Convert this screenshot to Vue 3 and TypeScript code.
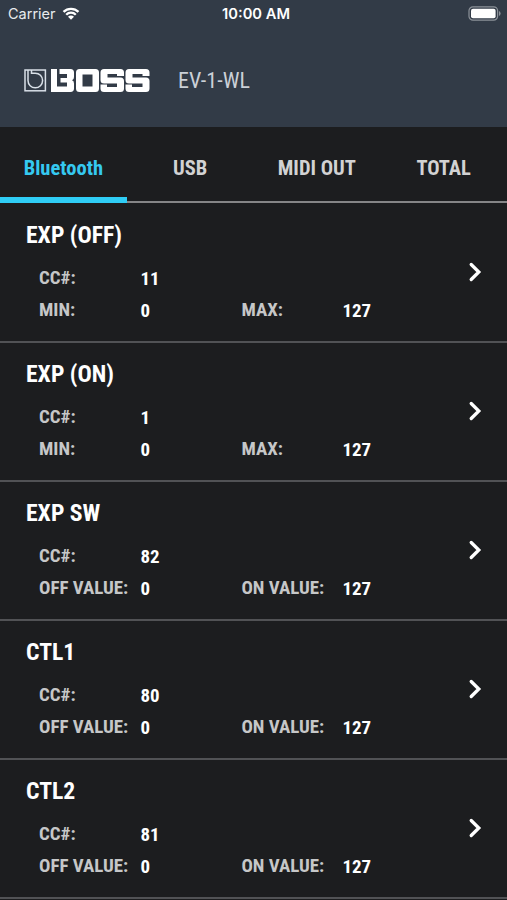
<script setup lang="ts">
interface Field { label: string; value: string }
interface Assign { name: string; cc: string; low: Field; high: Field }

const tabs: string[] = ['Bluetooth', 'USB', 'MIDI OUT', 'TOTAL']
const active = 'Bluetooth'

const expression = (name: string, cc: string): Assign => ({
  name, cc, low: { label: 'MIN:', value: '0' }, high: { label: 'MAX:', value: '127' },
})
const control = (name: string, cc: string): Assign => ({
  name, cc, low: { label: 'OFF VALUE:', value: '0' }, high: { label: 'ON VALUE:', value: '127' },
})

const rows: Assign[] = [
  expression('EXP (OFF)', '11'),
  expression('EXP (ON)', '1'),
  control('EXP SW', '82'),
  control('CTL1', '80'),
  control('CTL2', '81'),
]
</script>

<template>
  <main class="screen">
    <header class="header">
      <div class="status">
        <div class="carrier">
          <span>Carrier</span>
          <svg class="wifi" viewBox="0 0 18 13" width="18" height="13">
            <path d="M1.5 4.9a10.6 10.6 0 0 1 15 0M4.2 7.7a6.8 6.8 0 0 1 9.6 0" fill="none" stroke="#fff" stroke-width="2.3" />
            <path d="M9 12.8 6 9.7a4.2 4.2 0 0 1 6 0z" fill="#fff" />
          </svg>
        </div>
        <span class="time">10:00 AM</span>
        <svg class="battery" viewBox="0 0 33 15" width="33" height="15">
          <rect x="1" y="0.8" width="28.6" height="13.4" rx="4" fill="none" stroke="#8c9299" stroke-width="1.2" />
          <rect x="3" y="2.8" width="24.6" height="9.4" rx="2" fill="#fff" />
          <path d="M31 5v5q1.6-.8 1.6-2.5T31 5z" fill="#8c9299" />
        </svg>
      </div>
      <div class="brand">
        <svg class="logo" viewBox="0 0 126 23" width="126" height="23" role="img">
          <g fill="none" stroke="#d9e0e8" stroke-width="1.5">
            <rect x="1" y="1" width="20.4" height="20.8" />
            <path d="M4 1v10.5a7.3 7.3 0 1 0 7.3-7.3H7.5V1" />
          </g>
          <g fill="#fff" fill-rule="evenodd">
            <path d="M27 0h6v17.500h10v-4h-6.500V9h6.500V5h-7.500V0h11q3.500 0 3.500 3.500v4.500q0 2.800-2 3.300 2 .5 2 3.300v5q0 3.400-3.500 3.400H27z" />
            <path d="M55.500 0h16q3.500 0 3.500 3.500v16q0 3.500-3.500 3.500h-16q-3.500 0-3.500-3.500v-16Q52 0 55.500 0zM58.500 5.500v12h10v-12z" />
            <path d="M80 0h16.500q3.500 0 3.500 3.500V7H93V5h-9.500v3.500h13q3.500 0 3.500 3.500v7.500q0 3.500-3.500 3.500H80q-3.500 0-3.500-3.500V15.500H83V18h10v-3.500H80q-3.500 0-3.500-3.500V3.500Q76.500 0 80 0z" />
            <path d="M105 0h17q3.500 0 3.500 3.500V7h-7V5h-10v3.500H122q3.500 0 3.500 3.500v7.500q0 3.500-3.500 3.500h-17q-3.500 0-3.500-3.500V15.500h6.500V18h10.500v-3.500H105q-3.500 0-3.500-3.500V3.500Q101.500 0 105 0z" />
          </g>
        </svg>
        <span class="model">EV-1-WL</span>
      </div>
    </header>

    <nav class="tabs">
      <button v-for="tab in tabs" :key="tab" class="tab" :class="{ active: tab === active }">{{ tab }}</button>
    </nav>

    <section class="list">
      <article v-for="row in rows" :key="row.name" class="row">
        <div class="body">
          <h2 class="name">{{ row.name }}</h2>
          <div class="fields">
            <span class="label">CC#:</span>
            <span class="value wide">{{ row.cc }}</span>
            <span class="label">{{ row.low.label }}</span>
            <span class="value">{{ row.low.value }}</span>
            <span class="label">{{ row.high.label }}</span>
            <span class="value">{{ row.high.value }}</span>
          </div>
        </div>
        <svg class="chevron" viewBox="0 0 14 20" width="14" height="20">
          <path d="M3.2 2.5 10.8 10 3.2 17.5" fill="none" stroke="#fff" stroke-width="3.3" stroke-linecap="round" stroke-linejoin="miter" />
        </svg>
      </article>
    </section>
  </main>
</template>

<style>
body { margin: 0; background: #1c1d1f; }
</style>

<style scoped>
.screen {
  width: 507px;
  height: 900px;
  overflow: hidden;
  background: #1c1d1f;
  color: #fff;
  font-family: "Roboto Condensed", Roboto, sans-serif;
  font-stretch: 75%;
}
.header { height: 127px; background: #323b47; }
.status {
  display: grid;
  grid-template-columns: 1fr auto 1fr;
  align-items: center;
  height: 27px;
  padding: 0 6px 0 8px;
  font-family: Inter, sans-serif;
  font-stretch: 100%;
  font-size: 14.5px;
  color: #e8ebee;
}
.carrier { display: flex; align-items: center; gap: 6px; }
.time { padding-left: 3px; font-size: 14.7px; font-weight: 600; color: #fff; }
.battery { justify-self: end; }
.brand { display: flex; align-items: center; height: 106px; padding-left: 24px; gap: 28px; }
.model { font-size: 22px; color: #cbd0d7; }
.tabs {
  display: grid;
  grid-template-columns: repeat(4, 1fr);
  box-sizing: border-box;
  height: 76px;
  box-shadow: inset 0 -2px #858587;
}
.tab {
  border: 0;
  border-bottom: 6px solid transparent;
  padding: 11px 0 0;
  background: none;
  color: #d2d2d3;
  font: inherit;
  font-size: 20.5px;
  font-weight: 700;
}
.tab.active { color: #35c9f0; border-bottom-color: #2fcdf5; }
.list { padding-top: 1px; }
.row {
  display: flex;
  align-items: center;
  justify-content: space-between;
  box-sizing: border-box;
  height: 139px;
  padding: 0 25px 0 26px;
  border-bottom: 2px solid #515255;
}
.body { align-self: flex-start; }
.name { margin: 17px 0 0; font-size: 23.7px; line-height: 28px; font-weight: 700; }
.fields {
  display: grid;
  grid-template-columns: 101.4px 101px 101px 60px;
  grid-auto-rows: 32px;
  align-items: center;
  padding: 12px 0 0 13px;
  font-size: 18.9px;
  font-weight: 700;
  white-space: nowrap;
}
.label { color: #c6c7c8; }
.value { padding-top: 3px; }
.wide { grid-column: span 3; }
.chevron { margin-bottom: 2px; }
</style>
